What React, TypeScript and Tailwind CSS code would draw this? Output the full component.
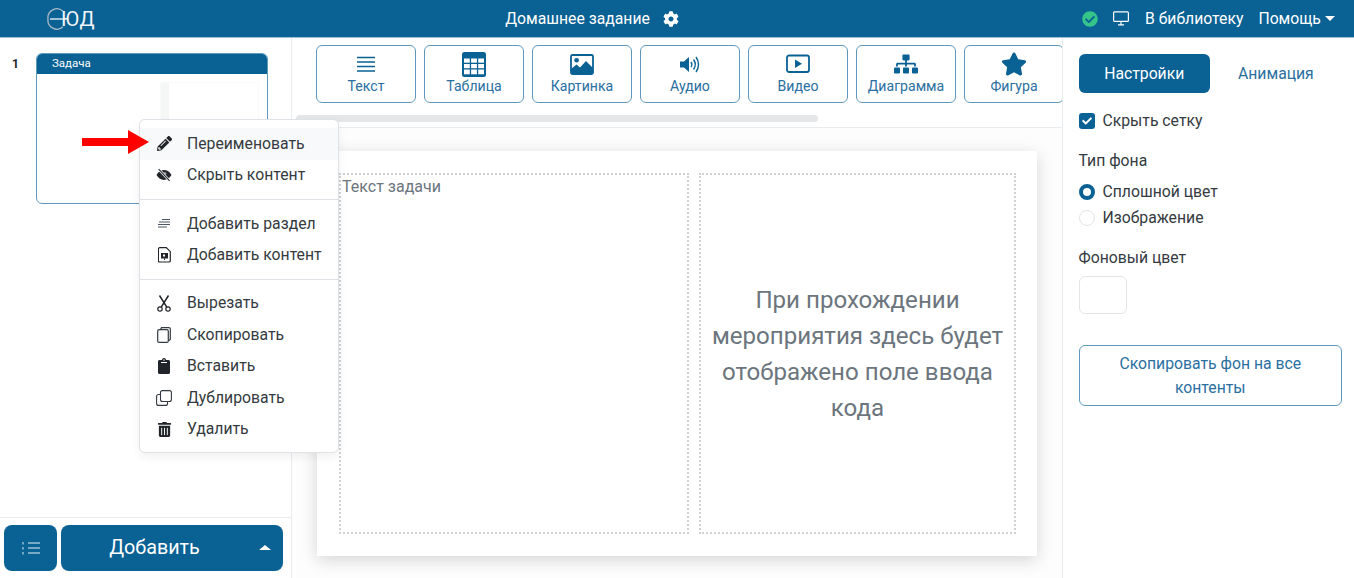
import React from "react";
import { FaPencilAlt, FaClipboard, FaTrashAlt, FaSitemap, FaStar, FaCog, FaCheckCircle, FaCheck } from "react-icons/fa";

const Burger = () => (
  <svg width="18" height="18" viewBox="0 0 18 18" fill="none" stroke="currentColor" strokeWidth="1.6">
    <path d="M0 2.5h18M0 7h18M0 11.5h18M0 16h18" />
  </svg>
);
const TableIcon = () => (
  <svg width="24" height="25" viewBox="0 0 24 25">
    <rect x="0" y="0" width="24" height="25" rx="2.5" fill="currentColor" />
    <g fill="#fff">
      <rect x="2" y="6.5" width="5.8" height="4.2" />
      <rect x="9.1" y="6.5" width="5.8" height="4.2" />
      <rect x="16.2" y="6.5" width="5.8" height="4.2" />
      <rect x="2" y="12" width="5.8" height="4.2" />
      <rect x="9.1" y="12" width="5.8" height="4.2" />
      <rect x="16.2" y="12" width="5.8" height="4.2" />
      <rect x="2" y="17.5" width="5.8" height="4.8" />
      <rect x="9.1" y="17.5" width="5.8" height="4.8" />
      <rect x="16.2" y="17.5" width="5.8" height="4.8" />
    </g>
  </svg>
);
const ImageIcon = () => (
  <svg width="24" height="21" viewBox="0 0 24 21">
    <rect x="1" y="1" width="22" height="19" rx="1.5" fill="none" stroke="currentColor" strokeWidth="1.8" />
    <circle cx="6.6" cy="6.2" r="2.3" fill="currentColor" />
    <path d="M1 20v-5l5.5-4.5 3.5 3 6-6.5 7 7v6z" fill="currentColor" />
  </svg>
);
const AudioIcon = () => (
  <svg width="20" height="19" viewBox="0 0 20 19" fill="none" stroke="currentColor">
    <path d="M0 6.500h4l5-4.500v15l-5-4.500H0z" fill="currentColor" stroke="none" />
    <path d="M11 7c1 1.500 1 3.500 0 5" strokeWidth="1.4" />
    <path d="M13.500 4.500c2.200 3 2.200 7 0 10" strokeWidth="1.4" />
    <path d="M16 2c3.300 4.500 3.300 10.500 0 15" strokeWidth="1.4" />
  </svg>
);
const VideoIcon = () => (
  <svg width="24" height="20" viewBox="0 0 24 20" fill="none">
    <rect x="1" y="1.5" width="22" height="16.500" rx="2" stroke="currentColor" strokeWidth="1.8" />
    <path d="M9 5.500l7 4.300-7 4.200z" fill="currentColor" />
  </svg>
);
const EyeSlash = () => (
  <svg width="17" height="14" viewBox="0 0 17 14">
    <path d="M0.500 7C2.500 3.600 5.300 1.800 8.500 1.800S14.500 3.600 16.500 7c-2 3.400-4.800 5.200-8 5.200S2.500 10.400.5 7z" fill="#212529" />
    <circle cx="9.500" cy="5.500" r="1.600" fill="#fff" opacity=".5" />
    <path d="M2.800 0.800L14.500 13.200" stroke="#fff" strokeWidth="2.600" />
    <path d="M2.800 0.800L14.500 13.200" stroke="#212529" strokeWidth="1.100" />
  </svg>
);
const SectionIcon = () => (
  <svg width="14" height="12" viewBox="0 0 14 12" stroke="#4b5563" strokeWidth="1">
    <path d="M5 1.500h8M2 4h11M1 6.500h12M1 9h9" />
  </svg>
);
const ContentIcon = () => (
  <svg width="13" height="16" viewBox="0 0 13 16">
    <path d="M1.700.7h6.600l4 4v9a1.300 1.300 0 0 1-1.300 1.300H1.700A1.300 1.300 0 0 1 .4 14V2A1.300 1.300 0 0 1 1.700.7z" fill="none" stroke="#212529" strokeWidth="1.2" />
    <rect x="3" y="6" width="7" height="5.500" fill="#212529" />
    <rect x="5" y="7.500" width="2" height="2" fill="#fff" />
    <path d="M6.500 11.500v1.500" stroke="#212529" />
  </svg>
);
const Scissors = () => (
  <svg width="14" height="17" viewBox="0 0 14 17" fill="none" stroke="#212529" strokeWidth="1.200">
    <circle cx="3" cy="14" r="2.200" />
    <circle cx="11" cy="14" r="2.200" />
    <path d="M4.200 12.200L11.500 0.500M9.800 12.200L2.500 0.500" strokeWidth="1.500" />
  </svg>
);
const CopyIcon = () => (
  <svg width="14" height="16" viewBox="0 0 14 16" fill="none" stroke="#343a40" strokeWidth="1.200">
    <path d="M3.500 2.500l1-1.900h7.500a1.300 1.300 0 0 1 1.300 1.300v10.500l-1.800 1.300" />
    <rect x="0.700" y="2.700" width="10.600" height="12.700" rx="1.500" />
  </svg>
);
const CloneIcon = () => (
  <svg width="16" height="16" viewBox="0 0 16 16" fill="none" stroke="#343a40" strokeWidth="1.100">
    <rect x="4.500" y="0.600" width="10.900" height="10.900" rx="2" />
    <path d="M4.500 4.500H2.600a2 2 0 0 0-2 2v6.900a2 2 0 0 0 2 2h6.900a2 2 0 0 0 2-2v-1.900" />
  </svg>
);
const ListIcon = () => (
  <svg width="18" height="14" viewBox="0 0 18 14" stroke="currentColor">
    <path d="M6 2h12M6 7h12M6 12h12" strokeWidth="1.200" />
    <path d="M1 1v2.500M1 6v2.500M1 11v2.500" strokeWidth="1.200" opacity=".8" />
  </svg>
);
const Monitor = () => (
  <svg width="16" height="15" viewBox="0 0 16 15" fill="none" stroke="#fff" strokeWidth="1.200">
    <rect x=".6" y=".8" width="14.800" height="9.600" rx="1" />
    <path d="M8 10.500v3M5 13.800h6" />
  </svg>
);
const LogoMark = () => (
  <svg width="18" height="22" viewBox="0 0 18 22" fill="none">
    <path d="M16 3.200A9 9 0 0 0 1 11a9 9 0 0 0 15 7.800" stroke="#a9bac6" strokeWidth="1.300" />
    <path d="M3 11h14.500" stroke="#f2f6f9" strokeWidth="1.300" />
  </svg>
);

const tools = [
  { label: "Текст", icon: <Burger /> },
  { label: "Таблица", icon: <TableIcon /> },
  { label: "Картинка", icon: <ImageIcon /> },
  { label: "Аудио", icon: <AudioIcon /> },
  { label: "Видео", icon: <VideoIcon /> },
  { label: "Диаграмма", icon: <FaSitemap size={24} /> },
  { label: "Фигура", icon: <FaStar size={26} /> },
];

const Item = ({ icon, label, active }: { icon: React.ReactNode; label: string; active?: boolean }) => (
  <div className={`flex h-[31.5px] items-center text-[15.75px] text-[#343a40] ${active ? "bg-[#f8f9fa]" : ""}`}>
    <span className="ml-[16px] flex w-[16px] justify-center text-[#212529]">{icon}</span>
    <span className="ml-[15px] whitespace-nowrap">{label}</span>
  </div>
);

export default function App() {
  return (
    <div className="flex h-[578px] w-[1354px] flex-col overflow-hidden bg-white font-['Roboto',sans-serif] text-[#343a40]">
      <header className="flex h-[38px] shrink-0 items-center border-b border-[#9fc0d6] bg-[#0a6194] text-white">
        <div className="ml-[47px] flex w-[240px] items-center">
          <LogoMark />
          <span className="-ml-[4px] text-[20px] leading-none tracking-[1px] text-[#f2f6f9]">ЮД</span>
        </div>
        <div className="flex w-[610px] items-center justify-center gap-[13px] text-[15.75px]">
          <span>Домашнее задание</span>
          <FaCog size={16} />
        </div>
        <div className="ml-[185px] flex flex-1 items-center text-[15.75px]">
          <span className="text-[#35c58a]"><FaCheckCircle size={16} /></span>
          <span className="ml-[15px]"><Monitor /></span>
          <span className="ml-[16px] whitespace-nowrap">В библиотеку</span>
          <span className="ml-[15px] whitespace-nowrap">Помощь</span>
          <span className="ml-[4px] h-0 w-0 border-x-[5px] border-t-[5px] border-x-transparent border-t-white" />
        </div>
      </header>

      <div className="relative flex min-h-0 flex-1">
        <aside className="flex w-[292px] shrink-0 flex-col border-r border-[#e9ecef]">
          <div className="flex flex-1 pl-[12px] pt-[15px]">
            <span className="w-[24px] pt-[4px] text-[12px] font-bold leading-[14px] text-[#212529]">1</span>
            <div className="h-[151px] w-[232px] overflow-hidden rounded-[6px] border border-[#5f9abd]">
              <div className="h-[20px] bg-[#0a6194] pl-[15px] text-[11.5px] leading-[19px] text-white">Задача</div>
              <div className="ml-[123px] mt-[8px] h-[100px] w-[99px] border border-[#f8f9f9] bg-white">
                <div className="h-full w-[8px] bg-[#f5f6f6]" />
              </div>
            </div>
          </div>
          <div className="flex h-[61px] gap-[4px] border-t border-[#e9ecef] pl-[4px] pt-[7px]">
            <div className="flex h-[46px] w-[53px] items-center justify-center rounded-[8px] bg-[#0a6194] text-[#e8f0f5]">
              <ListIcon />
            </div>
            <div className="relative flex h-[46px] w-[222px] items-center justify-center rounded-[8px] bg-[#0a6194] pr-[35px] text-[19.75px] text-white">
              Добавить
              <span className="absolute right-[12px] top-[20px] h-0 w-0 border-x-[6px] border-b-[5px] border-x-transparent border-b-white" />
            </div>
          </div>
        </aside>

        <main className="flex min-w-0 flex-1 flex-col border-r border-[#e9ecef]">
          <div className="h-[90px] shrink-0 border-b border-[#e9ecef]">
            <div className="flex h-[77px] gap-[8px] overflow-hidden pl-[24px] pt-[7px]">
              {tools.map((t) => (
                <div key={t.label} className="flex h-[58px] w-[100px] shrink-0 flex-col items-center rounded-[6px] border border-[#5f9abd] text-[#0a6194]">
                  <div className="flex h-[31px] items-center justify-center pt-[5px]">{t.icon}</div>
                  <div className="text-[14.1px] leading-[18px] text-[#2a6f9f]">{t.label}</div>
                </div>
              ))}
            </div>
            <div className="ml-[4px] h-[7px] w-[522px] rounded-full bg-[#e4e6e8]" />
          </div>
          <div className="flex flex-1 bg-[#fdfdfd] pl-[25px] pt-[23px]">
            <div className="flex h-[405px] w-[720px] gap-[10px] bg-white pl-[22px] pt-[22px] shadow-[0_4px_16px_rgba(0,0,0,0.16)]">
              <div className="h-[361px] w-[350px] border-2 border-dotted border-[#cfd2d5] pl-[1px] text-[16px] leading-[24px] text-[#6c757d]">Текст задачи</div>
              <div className="flex h-[361px] w-[317px] items-center justify-center border-2 border-dotted border-[#cfd2d5] px-[7px] text-center text-[24.1px] leading-[36px] text-[#6c757d]">
                При прохождении мероприятия здесь будет отображено поле ввода кода
              </div>
            </div>
          </div>
        </main>

        <aside className="w-[291px] shrink-0 pl-[15.5px] pr-[12px] pt-[16px] text-[15.75px] text-[#343a40]">
          <div className="flex items-center">
            <div className="flex h-[39px] w-[131.5px] items-center justify-center rounded-[6px] bg-[#0a6194] text-white">Настройки</div>
            <div className="ml-[28px] text-[#2a6f9f]">Анимация</div>
          </div>
          <div className="mt-[20px] flex items-center gap-[8px] leading-[16px]">
            <span className="flex h-[16px] w-[16px] items-center justify-center rounded-[3px] bg-[#0a6194] text-white"><FaCheck size={10} /></span>
            Скрыть сетку
          </div>
          <div className="mt-[24px] leading-[16px]">Тип фона</div>
          <div className="mt-[15px] flex items-center gap-[8px] leading-[16px]">
            <span className="h-[16px] w-[16px] rounded-full border-[4.5px] border-[#0a6194] bg-white" />
            Сплошной цвет
          </div>
          <div className="mt-[10px] flex items-center gap-[8px] leading-[16px]">
            <span className="h-[16px] w-[16px] rounded-full border border-[#e2e5e8] bg-white" />
            Изображение
          </div>
          <div className="mt-[24px] leading-[16px]">Фоновый цвет</div>
          <div className="mt-[10px] h-[38px] w-[48px] rounded-[6px] border border-[#e2e5e8] bg-white" />
          <div className="mt-[31px] flex h-[61px] w-[263.5px] items-center justify-center rounded-[6px] border border-[#5f9abd] px-[20px] text-center leading-[23.5px] text-[#2a6f9f]">
            Скопировать фон на все контенты
          </div>
        </aside>

        <div className="absolute left-[139px] top-[81px] w-[200px] rounded-[6px] border border-[#dee2e6] bg-white pb-[7px] pt-[8px] shadow-[0_4px_10px_rgba(0,0,0,0.06)]">
          <Item active icon={<FaPencilAlt size={15} />} label="Переименовать" />
          <Item icon={<EyeSlash />} label="Скрыть контент" />
          <div className="my-[8px] border-t border-[#dee2e6]" />
          <Item icon={<SectionIcon />} label="Добавить раздел" />
          <Item icon={<ContentIcon />} label="Добавить контент" />
          <div className="my-[7.75px] border-t border-[#dee2e6]" />
          <Item icon={<Scissors />} label="Вырезать" />
          <Item icon={<CopyIcon />} label="Скопировать" />
          <Item icon={<FaClipboard size={16} />} label="Вставить" />
          <Item icon={<CloneIcon />} label="Дублировать" />
          <Item icon={<FaTrashAlt size={15} />} label="Удалить" />
        </div>

        <svg className="absolute left-[82px] top-[91px]" width="67" height="26" viewBox="0 0 67 26">
          <path d="M0 9h46V1l21 12-21 12v-8H0z" fill="#ff0000" />
        </svg>
      </div>
    </div>
  );
}
